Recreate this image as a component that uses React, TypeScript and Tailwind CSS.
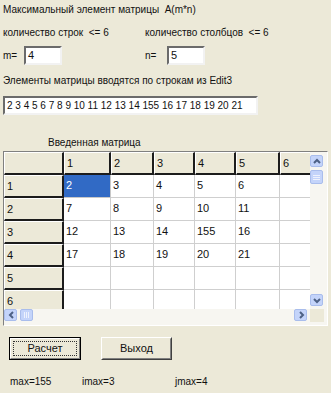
import React from 'react';

const colW = ['w-[60px]', 'w-[47px]', 'w-[43px]', 'w-[41px]', 'w-[41px]', 'w-[44px]', 'w-[44px]'];

const header = ['', '1', '2', '3', '4', '5', '6'];
const rows = [
  ['1', '2', '3', '4', '5', '6', ''],
  ['2', '7', '8', '9', '10', '11', ''],
  ['3', '12', '13', '14', '155', '16', ''],
  ['4', '17', '18', '19', '20', '21', ''],
  ['5', '', '', '', '', '', ''],
  ['6', '', '', '', '', '', ''],
];

function Chevron({ dir }: { dir: 'up' | 'down' | 'left' | 'right' }) {
  const pts = {
    up: '2,7 5,4 8,7',
    down: '2,4 5,7 8,4',
    left: '7,2 4,5 7,8',
    right: '4,2 7,5 4,8',
  }[dir];
  return (
    <svg width="10" height="10" viewBox="0 0 10 10">
      <polyline points={pts} fill="none" stroke="#4d6185" strokeWidth="2" />
    </svg>
  );
}

function ScrollBtn({ dir }: { dir: 'up' | 'down' | 'left' | 'right' }) {
  return (
    <div className="w-[13px] h-[12px] rounded-[2px] bg-[#c4d4fa] border border-[#a9bdec] flex items-center justify-center">
      <Chevron dir={dir} />
    </div>
  );
}

function Edit({ value, className }: { value: string; className: string }) {
  return (
    <div
      className={
        'h-[19px] bg-white border-2 border-t-[#6b6b6b] border-l-[#6b6b6b] border-b-[#f2f2f2] border-r-[#f2f2f2] pl-[2px] leading-[15px] whitespace-nowrap overflow-hidden ' +
        className
      }
    >
      {value}
    </div>
  );
}

function Cell({ text, col, fixed, selected }: { text: string; col: number; fixed: boolean; selected: boolean }) {
  let cls = 'shrink-0 h-[23px] pl-[2px] pt-[4px] text-[11px] leading-[13px] ' + colW[col] + ' ';
  if (fixed) {
    cls += 'bg-[#ece9d8] border-t border-l border-t-white border-l-white border-r-2 border-b-2 border-r-[#1c1c1c] border-b-[#1c1c1c]';
  } else if (selected) {
    cls += 'bg-[#316ac5] text-white border-r border-b border-[#c8c8c8]';
  } else {
    cls += 'bg-white border-r border-b border-[#cfcfcf]';
  }
  return <div className={cls}>{text}</div>;
}

export default function App() {
  return (
    <div className="w-[331px] h-[393px] bg-[#ece9d8] text-[#111] text-[10px] overflow-hidden font-['Liberation_Sans',Arial,sans-serif]">
      <div className="pl-[3px] pt-[3px] leading-[13px] whitespace-pre">Максимальный элемент матрицы  A(m*n)</div>

      <div className="flex pl-[3px] mt-[10px] leading-[13px] whitespace-pre">
        <div className="w-[142px]">количество строк  &lt;= 6</div>
        <div>количество столбцов  &lt;= 6</div>
      </div>

      <div className="flex items-center pl-[3px] mt-[7px]">
        <div className="w-[21px]">m=</div>
        <Edit value="4" className="w-[38px] text-[11px]" />
        <div className="w-[83px]" />
        <div className="w-[22px]">n=</div>
        <Edit value="5" className="w-[38px] text-[11px]" />
      </div>

      <div className="pl-[3px] mt-[9px] leading-[13px]">Элементы матрицы вводятся по строкам из Edit3</div>

      <div className="pl-[3px] mt-[9px]">
        <Edit value="2 3 4 5 6 7 8 9 10 11 12 13 14 155 16 17 18 19 20 21" className="w-[255px]" />
      </div>

      <div className="pl-[48px] mt-[21px] leading-[13px]">Введенная матрица</div>

      <div className="ml-[3px] mt-[2px] w-[325px] h-[175px] border border-t-[#808080] border-l-[#808080] border-b-white border-r-white bg-[#f7f6f1] flex flex-col">
        <div className="flex h-[157px]">
          <div className="w-[306px] overflow-hidden bg-white">
            <div className="flex">
              {header.map((h, i) => (
                <Cell key={i} text={h} col={i} fixed selected={false} />
              ))}
            </div>
            {rows.map((r, ri) => (
              <div key={ri} className="flex">
                {r.map((c, ci) => (
                  <Cell key={ci} text={c} col={ci} fixed={ci === 0} selected={ri === 0 && ci === 1} />
                ))}
              </div>
            ))}
          </div>
          <div className="w-[14px] flex flex-col pt-[3px] pb-[3px]">
            <ScrollBtn dir="up" />
            <div className="mt-[3px] w-[13px] h-[14px] rounded-[2px] bg-[#c4d4fa] border border-[#a9bdec] flex flex-col items-center justify-center gap-[1px]">
              <div className="w-[7px] h-px bg-[#eef2fd]" />
              <div className="w-[7px] h-px bg-[#eef2fd]" />
              <div className="w-[7px] h-px bg-[#eef2fd]" />
            </div>
            <div className="flex-1" />
            <ScrollBtn dir="down" />
          </div>
        </div>
        <div className="flex h-[13px]">
          <div className="w-[306px] flex items-start">
            <ScrollBtn dir="left" />
            <div className="ml-[3px] w-[13px] h-[12px] rounded-[2px] bg-[#c4d4fa] border border-[#a9bdec] flex items-center justify-center gap-[1px]">
              <div className="w-px h-[6px] bg-[#eef2fd]" />
              <div className="w-px h-[6px] bg-[#eef2fd]" />
              <div className="w-px h-[6px] bg-[#eef2fd]" />
            </div>
            <div className="flex-1" />
            <div className="mr-[3px]">
              <ScrollBtn dir="right" />
            </div>
          </div>
          <div className="w-[14px] bg-[#ece9d8]" />
        </div>
      </div>

      <div className="flex mt-[11px] pl-[9px] text-[11px]">
        <div className="w-[72px] h-[23px] border border-black">
          <div className="w-full h-full border border-t-white border-l-white border-b-[#808080] border-r-[#808080] p-[2px]">
            <div className="w-full h-full border border-dotted border-[#333] flex items-center justify-center leading-[13px]">
              Расчет
            </div>
          </div>
        </div>
        <div className="ml-[20px] w-[71px] h-[23px] border border-t-white border-l-white border-b-[#404040] border-r-[#404040]">
          <div className="w-full h-full border border-transparent border-b-[#808080] border-r-[#808080] flex items-center justify-center leading-[13px]">
            Выход
          </div>
        </div>
      </div>

      <div className="flex mt-[15px] leading-[13px]">
        <div className="pl-[10px] w-[82px]">max=155</div>
        <div className="w-[93px]">imax=3</div>
        <div>jmax=4</div>
      </div>
    </div>
  );
}
